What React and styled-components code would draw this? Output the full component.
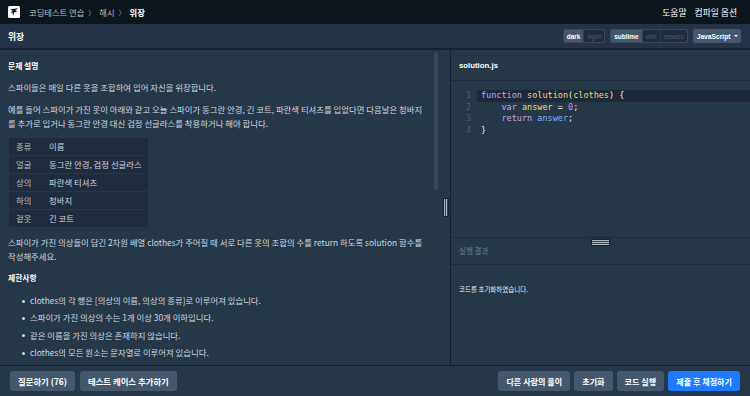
import styled, { createGlobalStyle } from 'styled-components';

const GlobalStyle = createGlobalStyle`
  body {
    margin: 0;
    background: #263747;
    font-family: "Noto Sans CJK KR", "Noto Sans", sans-serif;
    -webkit-font-smoothing: antialiased;
  }
`

const Page = styled.div`
  width: 750px;
  height: 396px;
  display: flex;
  flex-direction: column;
  overflow: hidden;
  background: #263747;
  color: #cfd8e0;
`

const Nav = styled.div`
  height: 24px;
  flex: none;
  display: flex;
  align-items: center;
  justify-content: space-between;
  padding: 0 13px 0 8px;
  background: #0c151c;
  font-size: 8.3px;
`

const Crumbs = styled.div`
  display: flex;
  align-items: center;
  gap: 4px;
  color: #b2c0cc;

  .sep { color: #8a98a6; font-size: 7px; }
  b { color: #fff; font-weight: 700; }
`

const NavLinks = styled.div`
  display: flex;
  gap: 8px;
  color: #fff;
  font-size: 8.8px;
`

const TitleBar = styled.div`
  height: 24px;
  flex: none;
  display: flex;
  align-items: center;
  justify-content: space-between;
  padding: 0 9px 0 8px;
  background: #263245;
  border-bottom: 2px solid #172030;

  h1 {
    margin: 0;
    font-size: 8.8px;
    font-weight: 700;
    color: #fff;
  }
`

const Controls = styled.div`
  display: flex;
  gap: 5px;
  align-items: center;
`

const Seg = styled.div`
  display: flex;
  height: 12px;
  border: 1px solid #3a4a5d;
  border-radius: 2px;
  background: #202b3d;
  overflow: hidden;
`

const SegItem = styled.span`
  display: flex;
  align-items: center;
  padding: 0 3px;
  font-family: "Liberation Sans", sans-serif;
  font-size: 6.5px;
  font-weight: 700;
  color: ${p => (p.$on ? '#fff' : '#3f5064')};
  background: ${p => (p.$on ? '#44576c' : 'transparent')};
  border-left: ${p => (p.$first ? 'none' : '1px solid #2e3c4f')};
`

const Select = styled.div`
  height: 14px;
  padding: 0 3.5px;
  display: flex;
  align-items: center;
  gap: 3px;
  background: #44576c;
  border-radius: 2px;
  font-family: "Liberation Sans", sans-serif;
  font-size: 6.7px;
  font-weight: 700;
  color: #fff;

  &::after {
    content: '';
    border-left: 2px solid transparent;
    border-right: 2px solid transparent;
    border-top: 2px solid #fff;
  }
`

const Main = styled.div`
  flex: 1;
  display: flex;
  min-height: 0;
`

const Left = styled.div`
  width: 441px;
  display: flex;
  flex: none;
`

const Desc = styled.div`
  flex: 1;
  padding: 9px 0 0 8px;
  font-size: 8.4px;
  line-height: 14px;
  overflow: hidden;

  h3 {
    margin: 0 0 7px;
    font-size: 7.8px;
    font-weight: 700;
    color: #fff;
  }

  h3.gap { margin-top: 4px; }
`

const P = styled.p`
  margin: 0 0 8px;
  word-break: ${p => (p.$keep ? 'keep-all' : 'normal')};
`

const Table = styled.table`
  border-collapse: collapse;
  background: #202b3d;
  margin: 0 0 8px 1px;
  width: 139px;

  td {
    height: 17px;
    padding: 0 0 0 7px;
    line-height: 17px;
    border-top: 1px solid #28354a;
    white-space: nowrap;
  }
  td:first-child { width: 26px; color: #b2c0cc; }
  tr:first-child td { border-top: none; }
`

const List = styled.ul`
  margin: 3px 0 0;
  padding-left: 22px;
  list-style: none;
  line-height: 17.4px;

  li { position: relative; }
  li::before {
    content: '';
    position: absolute;
    left: -8px;
    top: 7.5px;
    width: 3px;
    height: 3px;
    border-radius: 50%;
    background: #cfd8e0;
  }
`

const Scroll = styled.div`
  width: 4px;
  height: 138px;
  margin: 2px 3px 0 8px;
  background: #37485b;
  border-radius: 2px;
`

const Gutter = styled.div`
  width: 9px;
  flex: none;
  display: flex;
  align-items: center;
  justify-content: center;
  border-right: 1px solid #172030;
`

const Grip = styled.div`
  width: 6px;
  height: 19px;
  background: repeating-linear-gradient(90deg, #a9b4bf 0 1px, #3a4656 1px 2px);
  border: 1px solid #1a2230;
  box-sizing: border-box;
`

const Right = styled.div`
  flex: 1;
  display: flex;
  flex-direction: column;
`

const Editor = styled.div`
  height: 187px;
  flex: none;
  display: flex;
  flex-direction: column;
`

const Tab = styled.div`
  height: 30px;
  flex: none;
  display: flex;
  align-items: center;
  padding-left: 8px;
  border-bottom: 1px solid #1f2b3c;
  font-family: "Liberation Sans", sans-serif;
  font-size: 7.8px;
  font-weight: 700;
  color: #fff;
`

const Code = styled.pre`
  margin: 9px 0 0;
  font-family: "DejaVu Sans Mono", monospace;
  font-size: 8.5px;
  line-height: 11.7px;
  color: #e6eef5;
`

const Line = styled.div`
  display: flex;
  background: ${p => (p.$active ? '#1d2939' : 'transparent')};
  margin-left: 26px;

  .num {
    width: 30px;
    margin-left: -26px;
    padding-left: 15px;
    box-sizing: border-box;
    color: #4a5b70;
    background: ${p => (p.$active ? 'linear-gradient(90deg, #263747 26px, transparent 26px)' : 'transparent')};
  }
  .kw { color: #c6a4f0; }
  .fn { color: #f5dc63; }
  .var { color: #7fb4ff; }
  .n { color: #c792ea; }
`

const Splitter = styled.div`
  height: 0;
  border-top: 1px solid #1f2b3c;
  position: relative;
`

const HGrip = styled.div`
  position: absolute;
  left: 140px;
  top: 1px;
  width: 19px;
  height: 7px;
  background: repeating-linear-gradient(180deg, #a9b4bf 0 1px, #3a4656 1px 2px);
  border: 1px solid #1a2230;
  box-sizing: border-box;
`

const ResultHead = styled.div`
  height: 27px;
  flex: none;
  display: flex;
  align-items: center;
  padding: 0 0 1px 8px;
  box-sizing: border-box;
  border-bottom: 1px solid #1f2b3c;
  font-size: 7.5px;
  color: #6f8296;
`

const Output = styled.div`
  padding: 19px 0 0 8px;
  font-size: 6.5px;
  color: #e6eef5;
`

const Footer = styled.div`
  height: 30px;
  flex: none;
  display: flex;
  align-items: center;
  justify-content: space-between;
  padding: 0 10px;
  border-top: 1px solid #172030;
`

const BtnRow = styled.div`
  display: flex;
  gap: ${p => p.$gap || 4}px;
`

const Button = styled.button`
  height: 20px;
  padding: 0 8px;
  border: none;
  border-radius: 3px;
  background: ${p => (p.$primary ? '#1e7bff' : '#44576c')};
  color: #fff;
  font-family: "Noto Sans CJK KR", "Noto Sans", sans-serif;
  font-size: ${p => p.$size || 8.4}px;
  font-weight: 700;
`

const Logo = () => (
  <svg width="12" height="12" viewBox="0 0 12 12">
    <rect width="12" height="12" rx="1.5" fill="#fff" />
    <path d="M2 3.6 L10 2.2 L7.4 4.8 L9.4 5.6 L6.2 6.6 L5 10 L4.6 6.8 L2.4 6.2 L5 5 Z" fill="#0c151c" />
  </svg>
)

const rows = [
  ['종류', '이름'],
  ['얼굴', '동그란 안경, 검정 선글라스'],
  ['상의', '파란색 티셔츠'],
  ['하의', '청바지'],
  ['겉옷', '긴 코트'],
]

const App = () => {
  return (
    <Page>
      <GlobalStyle />
      <Nav>
        <Crumbs>
          <Logo />
          <span style={{ marginLeft: 5 }}>코딩테스트 연습</span>
          <span className="sep">〉</span>
          <span>해시</span>
          <span className="sep">〉</span>
          <b>위장</b>
        </Crumbs>
        <NavLinks>
          <span>도움말</span>
          <span>컴파일 옵션</span>
        </NavLinks>
      </Nav>
      <TitleBar>
        <h1>위장</h1>
        <Controls>
          <Seg>
            <SegItem $on $first>dark</SegItem>
            <SegItem>light</SegItem>
          </Seg>
          <Seg>
            <SegItem $on $first>sublime</SegItem>
            <SegItem>vim</SegItem>
            <SegItem>emacs</SegItem>
          </Seg>
          <Select>JavaScript</Select>
        </Controls>
      </TitleBar>
      <Main>
        <Left>
          <Desc>
            <h3>문제 설명</h3>
            <P>스파이들은 매일 다른 옷을 조합하여 입어 자신을 위장합니다.</P>
            <P>
              예를 들어 스파이가 가진 옷이 아래와 같고 오늘 스파이가 동그란 안경, 긴 코트, 파란색 티셔츠를 입었다면 다음날은 청바지를 추가로 입거나 동그란 안경 대신 검정 선글라스를 착용하거나 해야 합니다.
            </P>
            <Table>
              <tbody>
                {rows.map(r => (
                  <tr key={r[0]}>
                    <td>{r[0]}</td>
                    <td>{r[1]}</td>
                  </tr>
                ))}
              </tbody>
            </Table>
            <P $keep>
              스파이가 가진 의상들이 담긴 2차원 배열 clothes가 주어질 때 서로 다른 옷의 조합의 수를 return 하도록 solution 함수를 작성해주세요.
            </P>
            <h3 className="gap">제한사항</h3>
            <List>
              <li>clothes의 각 행은 [의상의 이름, 의상의 종류]로 이루어져 있습니다.</li>
              <li>스파이가 가진 의상의 수는 1개 이상 30개 이하입니다.</li>
              <li>같은 이름을 가진 의상은 존재하지 않습니다.</li>
              <li>clothes의 모든 원소는 문자열로 이루어져 있습니다.</li>
            </List>
          </Desc>
          <Scroll />
        </Left>
        <Gutter>
          <Grip />
        </Gutter>
        <Right>
          <Editor>
            <Tab>solution.js</Tab>
            <Code>
              <Line $active>
                <span className="num">1</span>
                <span><span className="kw">function</span> <span className="fn">solution</span>(<span className="fn">clothes</span>) {'{'}</span>
              </Line>
              <Line>
                <span className="num">2</span>
                <span>    <span className="kw">var</span> <span className="fn">answer</span> = <span className="n">0</span>;</span>
              </Line>
              <Line>
                <span className="num">3</span>
                <span>    <span className="kw">return</span> <span className="var">answer</span>;</span>
              </Line>
              <Line>
                <span className="num">4</span>
                <span>{'}'}</span>
              </Line>
            </Code>
          </Editor>
          <Splitter>
            <HGrip />
          </Splitter>
          <ResultHead>실행 결과</ResultHead>
          <Output>코드를 초기화하였습니다.</Output>
        </Right>
      </Main>
      <Footer>
        <BtnRow $gap={5}>
          <Button>질문하기 (76)</Button>
          <Button>테스트 케이스 추가하기</Button>
        </BtnRow>
        <BtnRow $gap={4}>
          <Button $size={8.1}>다른 사람의 풀이</Button>
          <Button $size={8.1}>초기화</Button>
          <Button $size={8.1}>코드 실행</Button>
          <Button $size={8.1} $primary>제출 후 채점하기</Button>
        </BtnRow>
      </Footer>
    </Page>
  );
};

export default App;
